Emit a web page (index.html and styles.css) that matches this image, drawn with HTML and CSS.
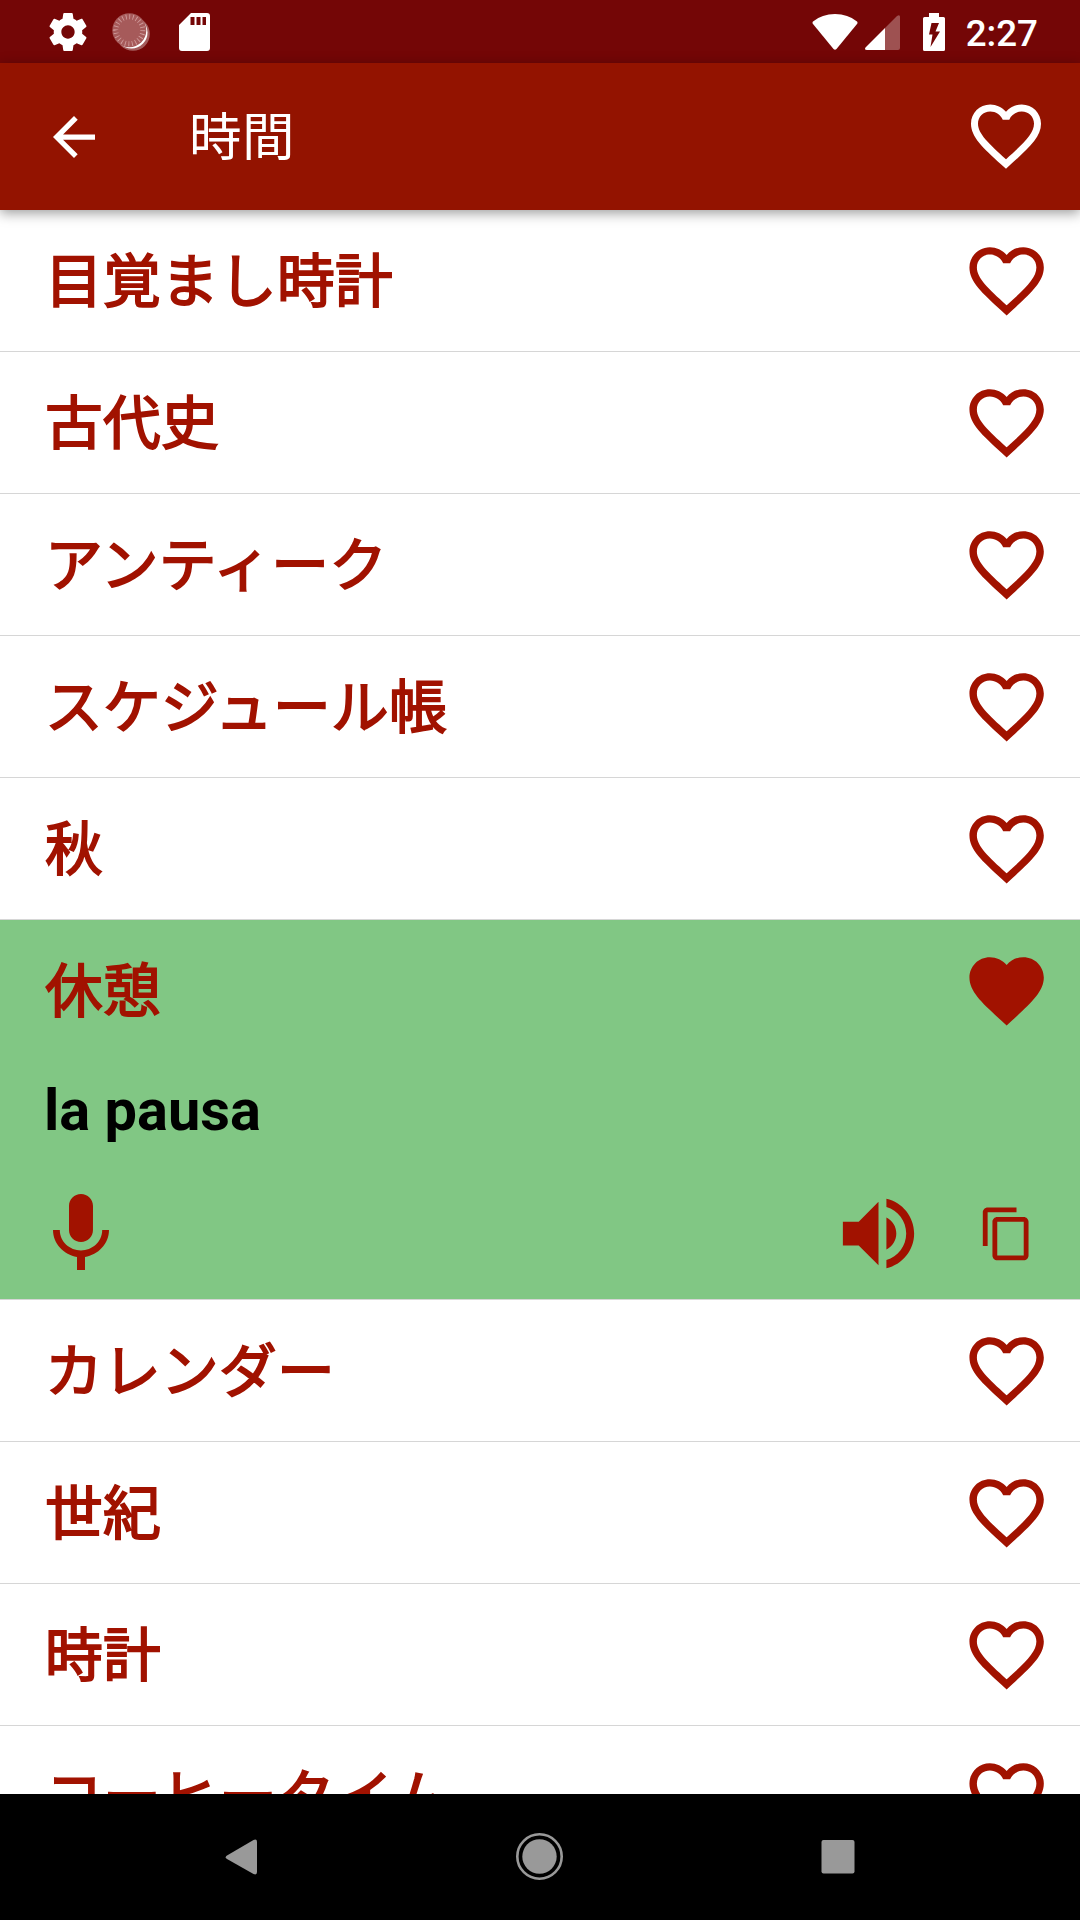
FILE: index.html
```html
<!DOCTYPE html>
<html lang="ja">
<head>
  <meta charset="UTF-8">
  <title>時間</title>
  <link rel="stylesheet" href="styles.css">
</head>
<body>
  <!-- shared icons -->
  <svg class="sprite" width="0" height="0">
    <symbol id="heart" viewBox="0 0 24 24">
      <path d="M16.5 3c-1.74 0-3.41.81-4.5 2.09C10.91 3.81 9.24 3 7.5 3 4.42 3 2 5.42 2 8.5c0 3.78 3.4 6.86 8.55 11.54L12 21.35l1.45-1.32C18.6 15.36 22 12.28 22 8.5 22 5.42 19.58 3 16.5 3zm-4.4 15.55l-.1.1-.1-.1C7.14 14.24 4 11.39 4 8.5 4 6.5 5.5 5 7.5 5c1.54 0 3.04.99 3.57 2.36h1.87C13.46 5.99 14.96 5 16.5 5c2 0 3.5 1.5 3.5 3.5 0 2.89-3.14 5.74-7.9 10.05z"/>
    </symbol>
    <symbol id="heart-full" viewBox="0 0 24 24">
      <path d="M12 21.35l-1.45-1.32C5.4 15.36 2 12.28 2 8.5 2 5.42 4.42 3 7.5 3c1.74 0 3.41.81 4.5 2.09C13.09 3.81 14.76 3 16.5 3 19.58 3 22 5.42 22 8.5c0 3.78-3.4 6.86-8.55 11.54L12 21.35z"/>
    </symbol>
  </svg>

  <header class="status-bar">
    <div class="status-left">
      <svg class="icon-gear" viewBox="2 2 20 20"><path d="M19.43 12.98c.04-.32.07-.64.07-.98s-.03-.66-.07-.98l2.11-1.65c.19-.15.24-.42.12-.64l-2-3.46c-.12-.22-.39-.3-.61-.22l-2.49 1c-.52-.4-1.08-.73-1.69-.98l-.38-2.65C14.46 2.18 14.25 2 14 2h-4c-.25 0-.46.18-.49.42l-.38 2.65c-.61.25-1.17.59-1.69.98l-2.49-1c-.23-.09-.49 0-.61.22l-2 3.46c-.13.22-.07.49.12.64l2.11 1.65c-.04.32-.07.65-.07.98s.03.66.07.98l-2.11 1.65c-.19.15-.24.42-.12.64l2 3.46c.12.22.39.3.61.22l2.49-1c.52.4 1.08.73 1.69.98l.38 2.65c.03.24.24.42.49.42h4c.25 0 .46-.18.49-.42l.38-2.65c.61-.25 1.17-.59 1.69-.98l2.49 1c.23.09.49 0 .61-.22l2-3.46c.12-.22.07-.49-.12-.64l-2.11-1.65zM12 15.5c-1.93 0-3.5-1.57-3.5-3.5s1.57-3.5 3.5-3.5 3.5 1.57 3.5 3.5-1.57 3.5-3.5 3.5z"/></svg>
      <svg class="icon-sync" viewBox="0 0 38 38">
        <circle class="sync-glow" cx="21" cy="21" r="16.8"/>
        <circle cx="19.500" cy="19.500" r="16"/>
        <circle class="sync-disc" cx="17.3" cy="17.3" r="17"/>
        <circle class="sync-ticks" cx="17.3" cy="17.3" r="13.5" pathLength="96"/>
      </svg>
      <svg class="icon-sd" viewBox="0 0 31 38"><path fill-rule="evenodd" d="M12 0H28Q31 0 31 3V35Q31 38 28 38H3Q0 38 0 35V12ZM11.500 4V12H15.500V4ZM17.500 4V12H21.500V4ZM23.500 4V12H27V4Z"/></svg>
    </div>
    <div class="status-right">
      <svg class="icon-wifi" viewBox="0 0 46 36"><path d="M1 7.500Q10 0 23 0T45 7.500Q46 8.500 45 10L24.500 35Q23 36.500 21.500 35L1 10Q0 8.500 1 7.500Z"/></svg>
      <svg class="icon-signal" viewBox="0 0 35 35"><path class="dim" d="M20 13L32 1Q35-1 35 2V33Q35 35 33 35H20Z"/><path d="M20 13V35H2Q-1 35 .5 32.500Z"/></svg>
      <svg class="icon-battery" viewBox="0 0 22 38"><path fill-rule="evenodd" d="M6 0H16V4H20.500Q22 4 22 5.500V36.500Q22 38 20.500 38H1.500Q0 38 0 36.500V5.500Q0 4 1.500 4H6ZM8.500 10L6 21.500H9.500L7.500 34L17 18.500H12.500L16 10Z"/></svg>
      <span class="clock">2:27</span>
    </div>
  </header>

  <div class="app-bar">
    <svg class="icon-back" viewBox="4 4 16 16"><path d="M20 11H7.830l5.590-5.590L12 4l-8 8 8 8 1.410-1.410L7.830 13H20v-2z"/></svg>
    <h1 class="title">時間</h1>
    <svg class="heart-big"><use href="#heart"/></svg>
  </div>

  <main class="list">
    <div class="row"><span class="word">目覚まし時計</span><svg class="heart"><use href="#heart"/></svg></div>
    <div class="row"><span class="word">古代史</span><svg class="heart"><use href="#heart"/></svg></div>
    <div class="row"><span class="word">アンティーク</span><svg class="heart"><use href="#heart"/></svg></div>
    <div class="row"><span class="word">スケジュール帳</span><svg class="heart"><use href="#heart"/></svg></div>
    <div class="row"><span class="word">秋</span><svg class="heart"><use href="#heart"/></svg></div>

    <div class="card">
      <div class="card-head"><span class="word">休憩</span><svg class="heart"><use href="#heart-full"/></svg></div>
      <div class="translation">la pausa</div>
      <div class="actions">
        <svg class="icon-mic" viewBox="0 0 24 24"><path d="M12 14c1.660 0 2.990-1.340 2.990-3L15 5c0-1.660-1.340-3-3-3S9 3.340 9 5v6c0 1.660 1.340 3 3 3zm5.300-3c0 3-2.540 5.100-5.300 5.100S6.700 14 6.700 11H5c0 3.410 2.720 6.230 6 6.720V21h2v-3.280c3.280-.48 6-3.300 6-6.720h-1.700z"/></svg>
        <svg class="icon-volume" viewBox="0 0 24 24"><path d="M3 9v6h4l5 5V4L7 9H3zm13.500 3c0-1.770-1.020-3.290-2.500-4.030v8.050c1.480-.73 2.500-2.250 2.500-4.020zM14 3.230v2.060c2.890.86 5 3.540 5 6.710s-2.110 5.850-5 6.710v2.060c4.010-.91 7-4.490 7-8.770s-2.990-7.860-7-8.770z"/></svg>
        <svg class="icon-copy" viewBox="0 0 24 24"><path d="M16 1H4c-1.100 0-2 .9-2 2v14h2V3h12V1zm3 4H8c-1.100 0-2 .9-2 2v14c0 1.100.9 2 2 2h11c1.100 0 2-.9 2-2V7c0-1.100-.9-2-2-2zm0 16H8V7h11v14z"/></svg>
      </div>
    </div>

    <div class="row"><span class="word">カレンダー</span><svg class="heart"><use href="#heart"/></svg></div>
    <div class="row"><span class="word">世紀</span><svg class="heart"><use href="#heart"/></svg></div>
    <div class="row"><span class="word">時計</span><svg class="heart"><use href="#heart"/></svg></div>
    <div class="row"><span class="word">コーヒータイム</span><svg class="heart"><use href="#heart"/></svg></div>
  </main>

  <nav class="nav-bar">
    <svg class="nav-icon" viewBox="0 0 48 48"><path d="M9 22.500L35.500 7Q39 5.500 39 9V39Q39 42.500 35.500 41L9 26Q6.500 24.200 9 22.500Z"/></svg>
    <svg class="nav-icon" viewBox="0 0 48 48"><circle cx="23.500" cy="23.500" r="17.200"/><circle class="ring" cx="23.500" cy="23.500" r="22.200"/></svg>
    <svg class="nav-icon" viewBox="0 0 48 48"><rect x="7.500" y="7" width="33" height="33.500" rx="2"/></svg>
  </nav>
</body>
</html>
```
FILE: styles.css
```css
:root {
  --status: #740606;
  --bar: #931300;
  --red: #a11200;
  --green: #81c784;
  --line: #d6d6d6;
}

* {
  box-sizing: border-box;
}

body {
  margin: 0;
  height: 1920px;
  display: flex;
  flex-direction: column;
  overflow: hidden;
  background: #fff;
  font-family: Roboto, "Noto Sans CJK JP", sans-serif;
}

svg {
  display: block;
  flex: none;
  fill: currentColor;
}

.sprite {
  position: absolute;
}

/* status bar */
.status-bar {
  flex: none;
  height: 63px;
  display: flex;
  justify-content: space-between;
  padding: 0 42px 0 49px;
  background: var(--status);
  color: #fff;
}

.status-left,
.status-right {
  display: flex;
  align-items: center;
}

.icon-gear {
  width: 38px;
  height: 38px;
}

.icon-sync {
  width: 38px;
  height: 38px;
  margin-left: 25px;
}

.sync-glow {
  opacity: 0.35;
}

.sync-disc {
  fill: #a65a5a;
}

.sync-ticks {
  fill: none;
  stroke: #d09c9c;
  stroke-width: 5;
  stroke-dasharray: 1 3;
}

.icon-sd {
  width: 31px;
  height: 38px;
  margin-left: 29px;
}

.icon-wifi {
  width: 46px;
  height: 36px;
}

.icon-signal {
  width: 35px;
  height: 35px;
  margin: 2px 0 0 7px;
}

.dim {
  opacity: 0.3;
}

.icon-battery {
  width: 22px;
  height: 38px;
  margin-left: 23px;
}

.clock {
  margin-left: 21px;
  padding-top: 4px;
  font-size: 36.75px;
  font-weight: 500;
  line-height: 44px;
}

/* app bar */
.app-bar {
  position: relative;
  flex: none;
  height: 147px;
  display: flex;
  align-items: center;
  padding: 0 32px 0 53px;
  background: var(--bar);
  color: #fff;
  box-shadow: 0 3px 12px rgba(0, 0, 0, 0.4);
}

.icon-back {
  width: 42px;
  height: 42px;
}

.title {
  flex: 1;
  margin: 0 0 0 94px;
  padding-top: 2px;
  font-size: 52.5px;
  font-weight: 400;
  line-height: 76px;
  letter-spacing: 0.5px;
}

.heart-big {
  width: 84px;
  height: 84px;
  margin-top: -2px;
}

/* word list */
.list {
  flex: 1;
  min-height: 0;
  overflow: hidden;
  color: var(--red);
}

.row,
.card-head {
  height: 142px;
  display: flex;
  align-items: center;
  justify-content: space-between;
  padding: 0 29px 0 45px;
}

.row,
.card {
  border-bottom: 1px solid var(--line);
}

.word {
  padding-top: 2px;
  font-size: 57.75px;
  line-height: 84px;
  letter-spacing: 0.25px;
  -webkit-text-stroke: 1.8px var(--red);
}

.heart {
  width: 89.25px;
  height: 89.25px;
}

.card {
  height: 380px;
  background: var(--green);
}

.card-head {
  height: 141px;
}

.translation {
  height: 100px;
  padding-left: 44px;
  color: #000;
  font-size: 57.75px;
  font-weight: 700;
  line-height: 99px;
}

.actions {
  display: flex;
  align-items: center;
  height: 138px;
  padding: 7px 44px 0 33px;
}

.icon-mic {
  width: 96px;
  height: 96px;
}

.icon-volume {
  width: 95px;
  height: 95px;
  margin-left: auto;
}

.icon-copy {
  width: 57.75px;
  height: 57.75px;
  margin-left: 52px;
}

/* system navigation */
.nav-bar {
  flex: none;
  height: 126px;
  display: flex;
  align-items: center;
  justify-content: center;
  gap: 250px;
  background: #000;
  color: #999;
}

.nav-icon {
  width: 48px;
  height: 48px;
}

.ring {
  fill: none;
  stroke: currentColor;
  stroke-width: 2.6;
}
```
